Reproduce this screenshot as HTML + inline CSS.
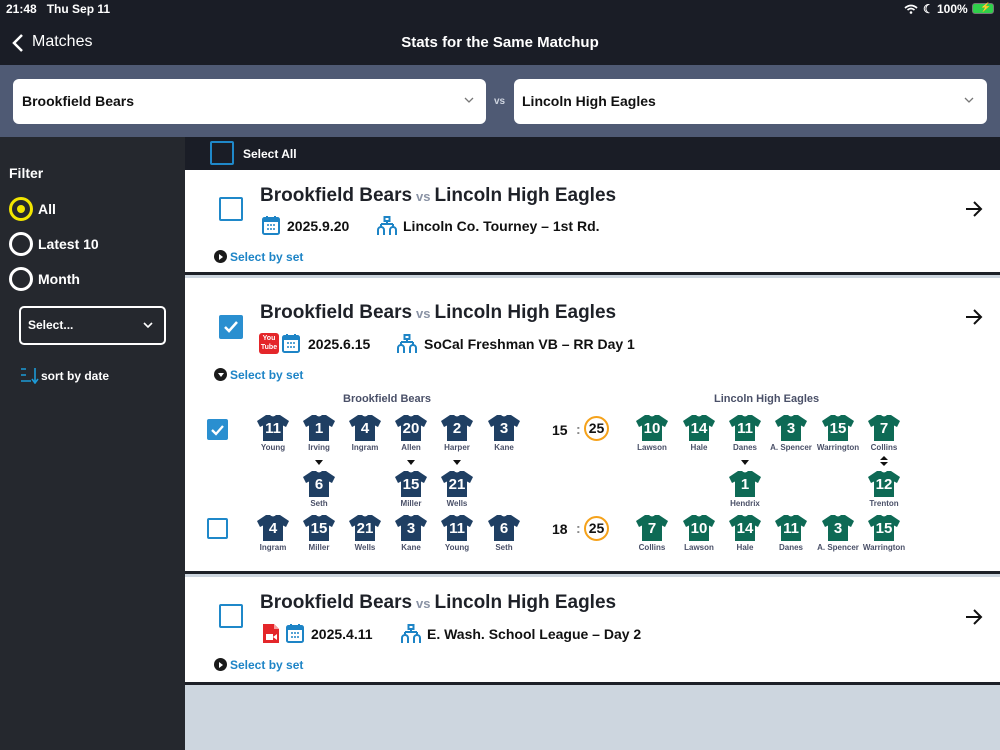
<!DOCTYPE html>
<html><head><meta charset="utf-8"><style>
*{margin:0;padding:0;box-sizing:border-box}
body{width:1000px;height:750px;overflow:hidden;font-family:"Liberation Sans",sans-serif;background:#cdd6df;position:relative}
.a{position:absolute}
.b{font-weight:bold}
.cb{position:absolute;width:24px;height:24px;border:2.5px solid #1f88c9;border-radius:2px;background:#fff}
.cbon{background:#2a8fd0;border-color:#2a8fd0}
.ttl{position:absolute;font-size:19px;font-weight:bold;color:#1e2128;white-space:nowrap}
.ttl span{font-size:13px;color:#8a93a5;margin:0 4px}
.meta{position:absolute;font-size:14px;font-weight:bold;color:#111;white-space:nowrap}
.sbs{position:absolute;font-size:12px;font-weight:bold;color:#1d84c6;white-space:nowrap}
.sbs i{display:inline-block;width:13px;height:13px;border-radius:50%;background:#1a1a1a;vertical-align:-2px;margin-right:3px;position:relative}
.sbs i:after{content:"";position:absolute;left:5px;top:3.5px;border-top:3px solid transparent;border-bottom:3px solid transparent;border-left:4px solid #fff}
.sbs i.d:after{left:3.5px;top:5px;border-left:3px solid transparent;border-right:3px solid transparent;border-top:4px solid #fff;border-bottom:0}
.p{position:absolute;width:64px;text-align:center}
.p svg{display:block;margin:0 auto}
.p .n{position:absolute;top:5px;left:0;width:64px;text-align:center;color:#fff;font-weight:bold;font-size:15px}
.p .nm{font-size:8px;font-weight:bold;color:#4a5068;margin-top:2px;white-space:nowrap}
.dn{position:absolute;width:0;height:0;border-left:4px solid transparent;border-right:4px solid transparent;border-top:5px solid #111}
.sc{position:absolute;font-size:14px;font-weight:bold;color:#111}
.circ{position:absolute;width:25px;height:25px;border:2px solid #f5a21b;border-radius:50%;text-align:center;font-size:14px;font-weight:bold;line-height:21px;color:#111}
</style></head><body>
<svg width="0" height="0" style="position:absolute"><defs>
<path id="j" d="M9 0 L13 0 Q16 3 19 0 L23 0 L32 6 L29 12 L26 10.5 L26 26 L6 26 L6 10.5 L3 12 L0 6 Z"/>
<g id="tr" fill="none" stroke="#1d84c6" stroke-width="2"><rect x="7.5" y="1" width="5" height="4"/><path d="M10 5v3M4 8h12M4 8v3M16 8v3M1 19v-5a3 3 0 0 1 6 0v5M13 19v-5a3 3 0 0 1 6 0v5"/></g>
<g id="cal"><rect x="1" y="3" width="16" height="16" rx="1.5" fill="none" stroke="#1d84c6" stroke-width="2"/><rect x="1" y="3" width="16" height="4" fill="#1d84c6"/><path d="M5 1v4M13 1v4" stroke="#1d84c6" stroke-width="2"/><path d="M5 10h2M8 10h2M11 10h2M5 14h2M8 14h2M11 14h2" stroke="#1d84c6" stroke-width="1.5"/></g>
</defs></svg>
<!-- top bar -->
<div class="a" style="left:0;top:0;width:1000px;height:65px;background:#1a1d26"></div>
<div class="a b" style="left:6px;top:2px;font-size:12px;color:#fff">21:48&nbsp;&nbsp; Thu Sep 11</div>
<div class="a b" style="left:923px;top:2px;font-size:12px;color:#fff">☾</div>
<div class="a b" style="left:937px;top:2px;font-size:12px;color:#fff">100%</div>
<svg class="a" style="left:904px;top:4px" width="14" height="10" viewBox="0 0 14 10"><path d="M1 4 Q7 -1 13 4" stroke="#fff" stroke-width="1.8" fill="none"/><path d="M3.5 6 Q7 3 10.5 6" stroke="#fff" stroke-width="1.8" fill="none"/><circle cx="7" cy="8.5" r="1.3" fill="#fff"/></svg>
<div class="a" style="left:972px;top:3px;width:22px;height:11px;border:1px solid #777;border-radius:3px;background:#2fd04a"></div>
<div class="a b" style="left:980px;top:2px;font-size:9px;color:#fff">⚡</div>
<svg class="a" style="left:12px;top:33px" width="12" height="20" viewBox="0 0 12 20"><path d="M10 2 L2 10 L10 18" stroke="#fff" stroke-width="2.5" fill="none"/></svg>
<div class="a" style="left:32px;top:33px;font-size:16px;color:#fff">Matches</div>
<div class="a b" style="left:0;width:1000px;top:34px;text-align:center;font-size:15px;color:#fff">Stats for the Same Matchup</div>
<!-- team band -->
<div class="a" style="left:0;top:65px;width:1000px;height:72px;background:#4f5a74"></div>
<div class="a" style="left:13px;top:79px;width:473px;height:45px;background:#fff;border-radius:6px"></div>
<div class="a b" style="left:22px;top:93px;font-size:14px;color:#111">Brookfield Bears</div>
<svg class="a" style="left:464px;top:97px" width="10" height="7"><path d="M1 1 L5 5 L9 1" stroke="#777" stroke-width="1.3" fill="none"/></svg>
<div class="a b" style="left:494px;top:96px;font-size:10px;color:#cfd5e0">vs</div>
<div class="a" style="left:514px;top:79px;width:473px;height:45px;background:#fff;border-radius:6px"></div>
<div class="a b" style="left:522px;top:93px;font-size:14px;color:#111">Lincoln High Eagles</div>
<svg class="a" style="left:964px;top:97px" width="10" height="7"><path d="M1 1 L5 5 L9 1" stroke="#777" stroke-width="1.3" fill="none"/></svg>
<!-- sidebar -->
<div class="a" style="left:0;top:137px;width:185px;height:613px;background:#25282e"></div>
<div class="a b" style="left:9px;top:165px;font-size:14px;color:#fff">Filter</div>
<div class="a" style="left:9px;top:197px;width:24px;height:24px;border:3px solid #f2e600;border-radius:50%"></div>
<div class="a" style="left:17px;top:205px;width:8px;height:8px;background:#f2e600;border-radius:50%"></div>
<div class="a b" style="left:38px;top:201px;font-size:14px;color:#fff">All</div>
<div class="a" style="left:9px;top:232px;width:24px;height:24px;border:3px solid #fff;border-radius:50%"></div>
<div class="a b" style="left:38px;top:236px;font-size:14px;color:#fff">Latest 10</div>
<div class="a" style="left:9px;top:267px;width:24px;height:24px;border:3px solid #fff;border-radius:50%"></div>
<div class="a b" style="left:38px;top:271px;font-size:14px;color:#fff">Month</div>
<div class="a" style="left:19px;top:306px;width:147px;height:39px;border:2px solid #fff;border-radius:5px"></div>
<div class="a b" style="left:28px;top:318px;font-size:12px;color:#fff">Select...</div>
<svg class="a" style="left:143px;top:322px" width="10" height="7"><path d="M1 1 L5 5 L9 1" stroke="#fff" stroke-width="1.6" fill="none"/></svg>
<svg class="a" style="left:20px;top:367px" width="20" height="17"><path d="M1 2h5M1 8h5M1 14h10" stroke="#1d9ad6" stroke-width="1.6"/><path d="M15 1v14M12 12l3 4 3-4" stroke="#1d9ad6" stroke-width="1.6" fill="none"/></svg>
<div class="a b" style="left:41px;top:369px;font-size:12px;color:#fff">sort by date</div>
<!-- select all -->
<div class="a" style="left:185px;top:137px;width:815px;height:33px;background:#1a1d26"></div>
<div class="a" style="left:210px;top:141px;width:24px;height:24px;border:2.5px solid #1f88c9;border-radius:2px"></div>
<div class="a b" style="left:243px;top:147px;font-size:12px;color:#fff">Select All</div>
<!-- card 1 -->
<div class="a" style="left:185px;top:170px;width:815px;height:105px;background:#fff;border-bottom:3px solid #1e2128"></div>
<div class="cb" style="left:219px;top:197px"></div>
<div class="ttl" style="left:260px;top:185px">Brookfield Bears<span>vs</span>Lincoln High Eagles</div>
<svg class="a" style="left:262px;top:215px" width="18" height="20" viewBox="0 0 18 20"><use href="#cal"/></svg>
<div class="meta" style="left:287px;top:218px">2025.9.20</div>
<svg class="a" style="left:377px;top:216px" width="20" height="20" viewBox="0 0 20 20"><use href="#tr"/></svg>
<div class="meta" style="left:403px;top:218px">Lincoln Co. Tourney – 1st Rd.</div>
<div class="sbs" style="left:214px;top:250px"><i></i>Select by set</div>
<svg class="a" style="left:964px;top:200px" width="20" height="18"><path d="M2 9h15M10 2l7 7-7 7" stroke="#111" stroke-width="2" fill="none"/></svg>
<!-- card 2 -->
<div class="a" style="left:185px;top:278px;width:815px;height:296px;background:#fff;border-bottom:3px solid #1e2128"></div>
<div class="cb cbon" style="left:219px;top:315px"></div>
<svg class="a" style="left:222px;top:318px" width="18" height="18"><path d="M3 9l4 4 8-9" stroke="#fff" stroke-width="2.5" fill="none"/></svg>
<div class="ttl" style="left:260px;top:302px">Brookfield Bears<span>vs</span>Lincoln High Eagles</div>
<div class="a" style="left:259px;top:333px;width:20px;height:21px;background:#e4262a;border-radius:3px;color:#fff;font-size:7px;font-weight:bold;text-align:center;line-height:9px;padding-top:1px">You<br>Tube</div>
<svg class="a" style="left:282px;top:333px" width="18" height="20" viewBox="0 0 18 20"><use href="#cal"/></svg>
<div class="meta" style="left:308px;top:336px">2025.6.15</div>
<svg class="a" style="left:397px;top:334px" width="20" height="20" viewBox="0 0 20 20"><use href="#tr"/></svg>
<div class="meta" style="left:424px;top:336px">SoCal Freshman VB – RR Day 1</div>
<div class="sbs" style="left:214px;top:368px"><i class="d"></i>Select by set</div>
<svg class="a" style="left:964px;top:308px" width="20" height="18"><path d="M2 9h15M10 2l7 7-7 7" stroke="#111" stroke-width="2" fill="none"/></svg>
<div class="a b" style="left:343px;top:393px;font-size:11px;color:#4a5068">Brookfield Bears</div>
<div class="a b" style="left:714px;top:393px;font-size:11px;color:#4a5068">Lincoln High Eagles</div>
<div class="cb cbon" style="left:207px;top:419px;width:21px;height:21px"></div>
<svg class="a" style="left:209px;top:421px" width="17" height="17"><path d="M3 9l4 4 7-8" stroke="#fff" stroke-width="2.3" fill="none"/></svg>
<div class="cb" style="left:207px;top:518px;width:21px;height:21px"></div>

<!-- row1 navy -->
<div class="p" style="left:241px;top:415px"><svg width="32" height="26" viewBox="0 0 32 26"><use href="#j" fill="#1f3f63"/></svg><div class="n">11</div><div class="nm">Young</div></div>
<div class="p" style="left:287px;top:415px"><svg width="32" height="26" viewBox="0 0 32 26"><use href="#j" fill="#1f3f63"/></svg><div class="n">1</div><div class="nm">Irving</div></div>
<div class="p" style="left:333px;top:415px"><svg width="32" height="26" viewBox="0 0 32 26"><use href="#j" fill="#1f3f63"/></svg><div class="n">4</div><div class="nm">Ingram</div></div>
<div class="p" style="left:379px;top:415px"><svg width="32" height="26" viewBox="0 0 32 26"><use href="#j" fill="#1f3f63"/></svg><div class="n">20</div><div class="nm">Allen</div></div>
<div class="p" style="left:425px;top:415px"><svg width="32" height="26" viewBox="0 0 32 26"><use href="#j" fill="#1f3f63"/></svg><div class="n">2</div><div class="nm">Harper</div></div>
<div class="p" style="left:472px;top:415px"><svg width="32" height="26" viewBox="0 0 32 26"><use href="#j" fill="#1f3f63"/></svg><div class="n">3</div><div class="nm">Kane</div></div>
<div class="dn" style="left:315px;top:460px"></div>
<div class="dn" style="left:407px;top:460px"></div>
<div class="dn" style="left:453px;top:460px"></div>
<div class="p" style="left:287px;top:471px"><svg width="32" height="26" viewBox="0 0 32 26"><use href="#j" fill="#1f3f63"/></svg><div class="n">6</div><div class="nm">Seth</div></div>
<div class="p" style="left:379px;top:471px"><svg width="32" height="26" viewBox="0 0 32 26"><use href="#j" fill="#1f3f63"/></svg><div class="n">15</div><div class="nm">Miller</div></div>
<div class="p" style="left:425px;top:471px"><svg width="32" height="26" viewBox="0 0 32 26"><use href="#j" fill="#1f3f63"/></svg><div class="n">21</div><div class="nm">Wells</div></div>
<div class="p" style="left:241px;top:515px"><svg width="32" height="26" viewBox="0 0 32 26"><use href="#j" fill="#1f3f63"/></svg><div class="n">4</div><div class="nm">Ingram</div></div>
<div class="p" style="left:287px;top:515px"><svg width="32" height="26" viewBox="0 0 32 26"><use href="#j" fill="#1f3f63"/></svg><div class="n">15</div><div class="nm">Miller</div></div>
<div class="p" style="left:333px;top:515px"><svg width="32" height="26" viewBox="0 0 32 26"><use href="#j" fill="#1f3f63"/></svg><div class="n">21</div><div class="nm">Wells</div></div>
<div class="p" style="left:379px;top:515px"><svg width="32" height="26" viewBox="0 0 32 26"><use href="#j" fill="#1f3f63"/></svg><div class="n">3</div><div class="nm">Kane</div></div>
<div class="p" style="left:425px;top:515px"><svg width="32" height="26" viewBox="0 0 32 26"><use href="#j" fill="#1f3f63"/></svg><div class="n">11</div><div class="nm">Young</div></div>
<div class="p" style="left:472px;top:515px"><svg width="32" height="26" viewBox="0 0 32 26"><use href="#j" fill="#1f3f63"/></svg><div class="n">6</div><div class="nm">Seth</div></div>
<!-- scores -->
<div class="sc" style="left:552px;top:422px">15</div><div class="sc" style="left:576px;top:421px;color:#888">:</div>
<div class="circ" style="left:584px;top:416px">25</div>
<div class="sc" style="left:552px;top:521px">18</div><div class="sc" style="left:576px;top:520px;color:#888">:</div>
<div class="circ" style="left:584px;top:516px">25</div>
<!-- green -->
<div class="p" style="left:620px;top:415px"><svg width="32" height="26" viewBox="0 0 32 26"><use href="#j" fill="#0e6a55"/></svg><div class="n">10</div><div class="nm">Lawson</div></div>
<div class="p" style="left:667px;top:415px"><svg width="32" height="26" viewBox="0 0 32 26"><use href="#j" fill="#0e6a55"/></svg><div class="n">14</div><div class="nm">Hale</div></div>
<div class="p" style="left:713px;top:415px"><svg width="32" height="26" viewBox="0 0 32 26"><use href="#j" fill="#0e6a55"/></svg><div class="n">11</div><div class="nm">Danes</div></div>
<div class="p" style="left:759px;top:415px"><svg width="32" height="26" viewBox="0 0 32 26"><use href="#j" fill="#0e6a55"/></svg><div class="n">3</div><div class="nm">A. Spencer</div></div>
<div class="p" style="left:806px;top:415px"><svg width="32" height="26" viewBox="0 0 32 26"><use href="#j" fill="#0e6a55"/></svg><div class="n">15</div><div class="nm">Warrington</div></div>
<div class="p" style="left:852px;top:415px"><svg width="32" height="26" viewBox="0 0 32 26"><use href="#j" fill="#0e6a55"/></svg><div class="n">7</div><div class="nm">Collins</div></div>
<div class="dn" style="left:741px;top:460px"></div>
<div class="a" style="left:880px;top:456px;width:0;height:0;border-left:4px solid transparent;border-right:4px solid transparent;border-bottom:4px solid #111"></div>
<div class="dn" style="left:880px;top:462px;border-top-width:4px"></div>
<div class="p" style="left:713px;top:471px"><svg width="32" height="26" viewBox="0 0 32 26"><use href="#j" fill="#0e6a55"/></svg><div class="n">1</div><div class="nm">Hendrix</div></div>
<div class="p" style="left:852px;top:471px"><svg width="32" height="26" viewBox="0 0 32 26"><use href="#j" fill="#0e6a55"/></svg><div class="n">12</div><div class="nm">Trenton</div></div>
<div class="p" style="left:620px;top:515px"><svg width="32" height="26" viewBox="0 0 32 26"><use href="#j" fill="#0e6a55"/></svg><div class="n">7</div><div class="nm">Collins</div></div>
<div class="p" style="left:667px;top:515px"><svg width="32" height="26" viewBox="0 0 32 26"><use href="#j" fill="#0e6a55"/></svg><div class="n">10</div><div class="nm">Lawson</div></div>
<div class="p" style="left:713px;top:515px"><svg width="32" height="26" viewBox="0 0 32 26"><use href="#j" fill="#0e6a55"/></svg><div class="n">14</div><div class="nm">Hale</div></div>
<div class="p" style="left:759px;top:515px"><svg width="32" height="26" viewBox="0 0 32 26"><use href="#j" fill="#0e6a55"/></svg><div class="n">11</div><div class="nm">Danes</div></div>
<div class="p" style="left:806px;top:515px"><svg width="32" height="26" viewBox="0 0 32 26"><use href="#j" fill="#0e6a55"/></svg><div class="n">3</div><div class="nm">A. Spencer</div></div>
<div class="p" style="left:852px;top:515px"><svg width="32" height="26" viewBox="0 0 32 26"><use href="#j" fill="#0e6a55"/></svg><div class="n">15</div><div class="nm">Warrington</div></div>
<!-- card 3 -->
<div class="a" style="left:185px;top:577px;width:815px;height:108px;background:#fff;border-bottom:3px solid #1e2128"></div>
<div class="cb" style="left:219px;top:604px"></div>
<div class="ttl" style="left:260px;top:592px">Brookfield Bears<span>vs</span>Lincoln High Eagles</div>
<svg class="a" style="left:262px;top:623px" width="18" height="21" viewBox="0 0 18 21"><path d="M1 1h11l5 5v14H1z" fill="#e4262a"/><path d="M12 1v5h5" fill="#f7a0a0"/><rect x="4" y="11" width="7" height="6" fill="#fff"/><path d="M11 14l4-3v6z" fill="#fff"/></svg>
<svg class="a" style="left:286px;top:623px" width="18" height="20" viewBox="0 0 18 20"><use href="#cal"/></svg>
<div class="meta" style="left:311px;top:626px">2025.4.11</div>
<svg class="a" style="left:401px;top:624px" width="20" height="20" viewBox="0 0 20 20"><use href="#tr"/></svg>
<div class="meta" style="left:427px;top:626px">E. Wash. School League – Day 2</div>
<div class="sbs" style="left:214px;top:658px"><i></i>Select by set</div>
<svg class="a" style="left:964px;top:608px" width="20" height="18"><path d="M2 9h15M10 2l7 7-7 7" stroke="#111" stroke-width="2" fill="none"/></svg>
</body></html>
